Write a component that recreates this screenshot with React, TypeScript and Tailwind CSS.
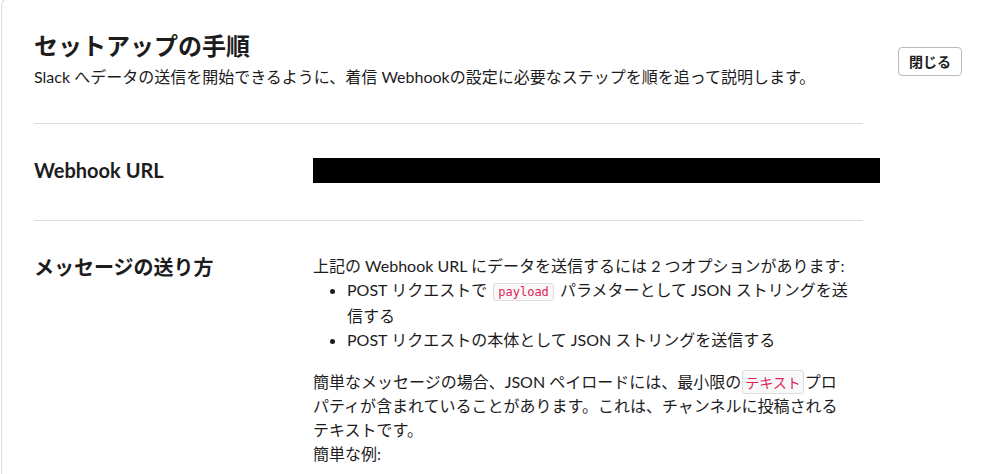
import React from "react";

const font = { fontFamily: 'Lato, "Noto Sans CJK JP", sans-serif' };

function Code({ children, mono }: { children: React.ReactNode; mono?: boolean }) {
  return (
    <code
      className={
        mono
          ? "mx-[2px] rounded-[3px] border border-[#dddddd] bg-[#f8f8f8] px-[4px] py-[1px] text-[12px] text-[#e01e5a] [font-family:'DejaVu_Sans_Mono',monospace]"
          : "mx-[1px] rounded-[3px] border border-[#dddddd] bg-[#f8f8f8] px-[2px] py-[1px] text-[14px] text-[#e01e5a] [font-family:'Noto_Sans_CJK_JP',sans-serif]"
      }
    >
      {children}
    </code>
  );
}

export default function App() {
  return (
    <div className="min-h-[474px] bg-white pl-px text-[#1d1c1d]" style={font}>
      <div className="-mt-px flex min-h-[475px] rounded-tl-[6px] border-l border-t border-[#dcdcdc] pl-[32px]">
        <div className="w-[846px] shrink-0">
          <div className="pt-[31px]">
            <h1 className="text-[24px] font-bold leading-[30px]">セットアップの手順</h1>
            <p className="mt-[4px] text-[16px] leading-[24px]">
              Slack へデータの送信を開始できるように、着信 Webhookの設定に必要なステップを順を追って説明します。
            </p>
          </div>
          <div className="mt-[34px] h-px w-[829px] bg-[#dddddd]" />
          <div className="flex items-center pb-[37px] pt-[33px]">
            <div className="w-[279px] shrink-0 text-[20px] font-bold leading-[26px]">Webhook URL</div>
            <div className="h-[25px] w-[567px] shrink-0 bg-black" />
          </div>
          <div className="h-px w-[829px] bg-[#dddddd]" />
          <div className="flex items-start pt-[33px]">
            <div className="w-[279px] shrink-0 text-[20px] font-bold leading-[26px]">メッセージの送り方</div>
            <div className="w-[538px] shrink-0 text-[16px] leading-[24px]">
              <p>上記の Webhook URL にデータを送信するには 2 つオプションがあります:</p>
              <ul className="mb-[18px] list-disc pl-[34px]">
                <li>
                  POST リクエストで <Code mono>payload</Code> パラメターとして JSON ストリングを送信する
                </li>
                <li>POST リクエストの本体として JSON ストリングを送信する</li>
              </ul>
              <p>
                簡単なメッセージの場合、JSON ペイロードには、最小限の<Code>テキスト</Code>プロパティが含まれていることがあります。これは、チャンネルに投稿されるテキストです。
                <br />
                簡単な例:
              </p>
            </div>
          </div>
        </div>
        <div className="ml-[18px] pt-[47px]">
          <button className="h-[29px] rounded-[4px] border border-[#bbbbbb] bg-white px-[10px] text-[14px] font-bold leading-none text-[#1d1c1d]">
            閉じる
          </button>
        </div>
      </div>
    </div>
  );
}
